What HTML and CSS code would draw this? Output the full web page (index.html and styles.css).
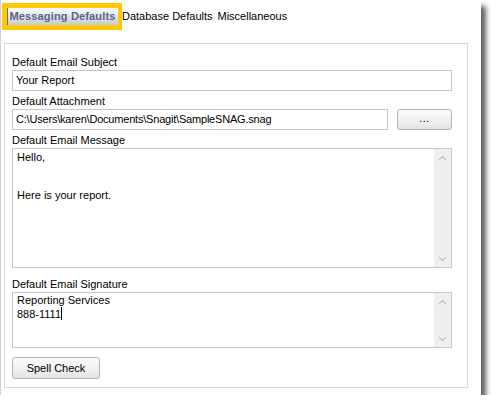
FILE: index.html
```html
<!DOCTYPE html>
<html>
<head>
<meta charset="utf-8">
<link rel="stylesheet" href="styles.css">
</head>
<body>
<div class="window">
  <div class="tabs">
    <div class="tab-hl"><div class="tab active">Messaging Defaults</div></div>
    <div class="tab">Database Defaults</div>
    <div class="tab">Miscellaneous</div>
  </div>
  <div class="panel">
    <div class="label">Default Email Subject</div>
    <div class="input">Your Report</div>
    <div class="label">Default Attachment</div>
    <div class="row">
      <div class="input grow path">C:\Users\karen\Documents\Snagit\SampleSNAG.snag</div>
      <div class="btn btn-browse">...</div>
    </div>
    <div class="label">Default Email Message</div>
    <div class="area area-msg">
      <div class="area-text">Hello,<br><br><br>Here is your report.</div>
      <div class="scroll">
        <svg class="arrow" width="9" height="6" viewBox="0 0 9 6"><path d="M1 5 L4.5 1.5 L8 5" fill="none" stroke="#c2c2c2" stroke-width="1.3"/></svg>
        <svg class="arrow" width="9" height="6" viewBox="0 0 9 6"><path d="M1 1 L4.5 4.5 L8 1" fill="none" stroke="#c2c2c2" stroke-width="1.3"/></svg>
      </div>
    </div>
    <div class="label label-sig">Default Email Signature</div>
    <div class="area area-sig">
      <div class="area-text sig-text">Reporting Services<br>888-1111<span class="caret"></span></div>
      <div class="scroll">
        <svg class="arrow" width="9" height="6" viewBox="0 0 9 6"><path d="M1 5 L4.5 1.5 L8 5" fill="none" stroke="#c2c2c2" stroke-width="1.3"/></svg>
        <svg class="arrow" width="9" height="6" viewBox="0 0 9 6"><path d="M1 1 L4.5 4.5 L8 1" fill="none" stroke="#c2c2c2" stroke-width="1.3"/></svg>
      </div>
    </div>
    <div class="btn btn-spell">Spell Check</div>
  </div>
</div>
</body>
</html>
```

FILE: styles.css
```css
html, body {
  margin: 0;
  padding: 0;
  background: #ffffff;
}
body {
  font-family: "Liberation Sans", Arial, sans-serif;
  font-size: 11px;
  color: #000;
}
.window {
  width: 481px;
  height: 395px;
  background: #fff;
  border-left: 1px solid #d0d0d0;
  box-shadow: 5px 6px 5px rgba(0, 0, 0, 0.62);
  box-sizing: border-box;
}
.tabs {
  display: flex;
  align-items: flex-start;
  height: 43px;
}
.tab-hl {
  margin-left: 1px;
  margin-top: 3px;
  border: 5px solid #ffc800;
  border-right-width: 4px;
  display: flex;
}
.tab {
  height: 17px;
  line-height: 17px;
}
.tab-hl + .tab {
  margin-top: 8px;
  margin-left: 0;
}
.tab-hl + .tab + .tab {
  margin-top: 8px;
  margin-left: 5px;
}
.tab.active {
  width: 111px;
  height: 17px;
  text-align: center;
  font-weight: bold;
  letter-spacing: 0.15px;
  color: #56658a;
  background: linear-gradient(to bottom, #ffffff 0%, #e4e6ea 45%, #c6cad2 100%);
  box-shadow: inset 1px 0 0 #6a6f78;
}
.panel {
  margin-left: 3px;
  width: 464px;
  height: 345px;
  border: 1px solid #dadada;
  box-sizing: border-box;
  padding: 10px 15px 0 7px;
  display: flex;
  flex-direction: column;
}
.label {
  height: 16px;
  line-height: 16px;
}
.label + .input, .label + .row {
  margin-bottom: 2px;
}
.input {
  height: 21px;
  border: 1px solid #c6c6c6;
  box-sizing: border-box;
  line-height: 19px;
  padding-left: 3px;
  white-space: nowrap;
  overflow: hidden;
}
.path {
  letter-spacing: -0.2px;
}
.row {
  display: flex;
  gap: 9px;
}
.grow {
  flex: 1;
}
.btn {
  box-sizing: border-box;
  border: 1px solid #b4b4b4;
  border-radius: 3px;
  background: linear-gradient(to bottom, #fbfbfb 0%, #f1f1f1 50%, #e4e4e4 100%);
  display: flex;
  align-items: center;
  justify-content: center;
}
.btn-browse {
  width: 55px;
  height: 21px;
  letter-spacing: 0.5px;
  padding-bottom: 3px;
}
.area {
  border: 1px solid #c6c6c6;
  box-sizing: border-box;
  display: flex;
}
.area-msg {
  height: 120px;
}
.area-sig {
  height: 56px;
}
.area-text {
  flex: 1;
  line-height: 12.5px;
  padding: 2px 0 0 4px;
}
.sig-text {
  padding-top: 1px;
}
.caret {
  display: inline-block;
  width: 1px;
  height: 13px;
  background: #000;
  vertical-align: -2px;
}
.scroll {
  width: 17px;
  background: #efefef;
  display: flex;
  flex-direction: column;
  justify-content: space-between;
  align-items: center;
  padding: 6px 0 5px;
}
.arrow {
  display: block;
}
.label-sig {
  margin-top: 8px;
}
.btn-spell {
  margin-top: 9px;
  width: 88px;
  height: 22px;
}
```
